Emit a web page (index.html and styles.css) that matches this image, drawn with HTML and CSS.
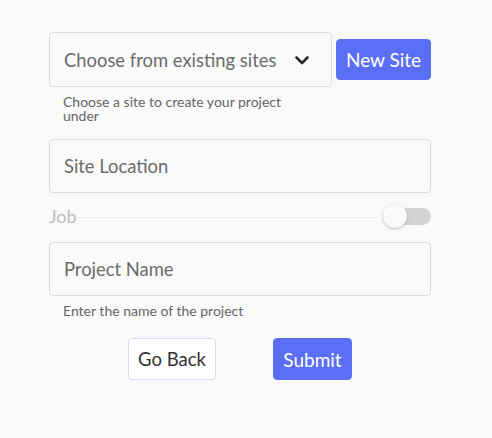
FILE: index.html
```html
<!DOCTYPE html>
<html>
<head>
<meta charset="utf-8">
<link rel="stylesheet" href="styles.css">
</head>
<body>
<div class="form">
  <div class="site-row">
    <div class="select">
      <span class="placeholder">Choose from existing sites</span>
      <svg class="chevron" width="14" height="9" viewBox="0 0 14 9"><path d="M1.5 1.5 L7 7 L12.5 1.5" fill="none" stroke="#2b2b2b" stroke-width="2.6" stroke-linecap="round" stroke-linejoin="round"/></svg>
    </div>
    <button class="btn primary new-site">New Site</button>
  </div>
  <p class="helper narrow">Choose a site to create your project under</p>

  <div class="field location"><span class="placeholder">Site Location</span></div>

  <div class="job-row">
    <span class="job-label">Job</span>
    <span class="dots"></span>
    <span class="switch"><span class="track"></span><span class="knob"></span></span>
  </div>

  <div class="field"><span class="placeholder">Project Name</span></div>
  <p class="helper">Enter the name of the project</p>

  <div class="actions">
    <button class="btn outline">Go Back</button>
    <button class="btn primary">Submit</button>
  </div>
</div>
</body>
</html>
```
FILE: styles.css
```css
html, body {
  margin: 0;
  padding: 0;
  background: #fafafa;
}
body {
  font-family: Lato, "Open Sans", sans-serif;
}
.form {
  width: 382px;
  margin-left: 49px;
  padding-top: 32px;
  display: flex;
  flex-direction: column;
}
.site-row {
  display: flex;
  align-items: center;
  gap: 4px;
}
.select {
  box-sizing: border-box;
  width: 283px;
  height: 55px;
  border: 1px solid #dcdcdc;
  border-radius: 4px;
  display: flex;
  align-items: center;
  justify-content: space-between;
  padding: 0 22px 0 14px;
}
.placeholder {
  font-size: 18.4px;
  color: #6b6b6b;
}
.chevron {
  display: block;
  margin-top: 2px;
}
.btn {
  font-family: Lato, "Open Sans", sans-serif;
  font-size: 19px;
  border-radius: 4px;
  height: 42px;
  padding: 0;
  white-space: nowrap;
  cursor: pointer;
}
.primary {
  background: #5b6ff6;
  color: #fff;
  border: 1px solid #5b6ff6;
}
.new-site {
  width: 95px;
  height: 41px;
}
.outline {
  background: #fff;
  color: #333;
  border: 1px solid #d6dcfb;
  width: 88px;
  font-size: 18.5px;
}
.helper {
  margin: 8px 0 0 14px;
  font-size: 14px;
  line-height: 14px;
  color: #666;
}
.narrow {
  width: 225px;
}
.field {
  box-sizing: border-box;
  height: 54px;
  border: 1px solid #dcdcdc;
  border-radius: 4px;
  display: flex;
  align-items: center;
  padding: 0 14px;
}
.location {
  margin-top: 16px;
}
.job-row {
  display: flex;
  align-items: center;
  height: 24px;
  margin: 11px 0 14px;
}
.job-label {
  font-size: 18px;
  color: #bdbdbd;
}
.dots {
  flex: 1;
  height: 0;
  border-top: 1px dotted #d9d9d9;
  margin: 2px 8px 0 2px;
}
.switch {
  position: relative;
  width: 47px;
  height: 24px;
}
.track {
  position: absolute;
  left: 1px;
  right: 0;
  top: 4px;
  height: 17px;
  border-radius: 9px;
  background: #d3d3d3;
}
.knob {
  position: absolute;
  left: -1px;
  top: 0;
  width: 24px;
  height: 24px;
  border-radius: 50%;
  background: #fafafa;
  box-shadow: 0 1px 3px rgba(0,0,0,0.25);
}
.actions {
  display: flex;
  justify-content: center;
  gap: 57px;
  margin-top: 20px;
}
.actions .primary {
  width: 79px;
}
```
